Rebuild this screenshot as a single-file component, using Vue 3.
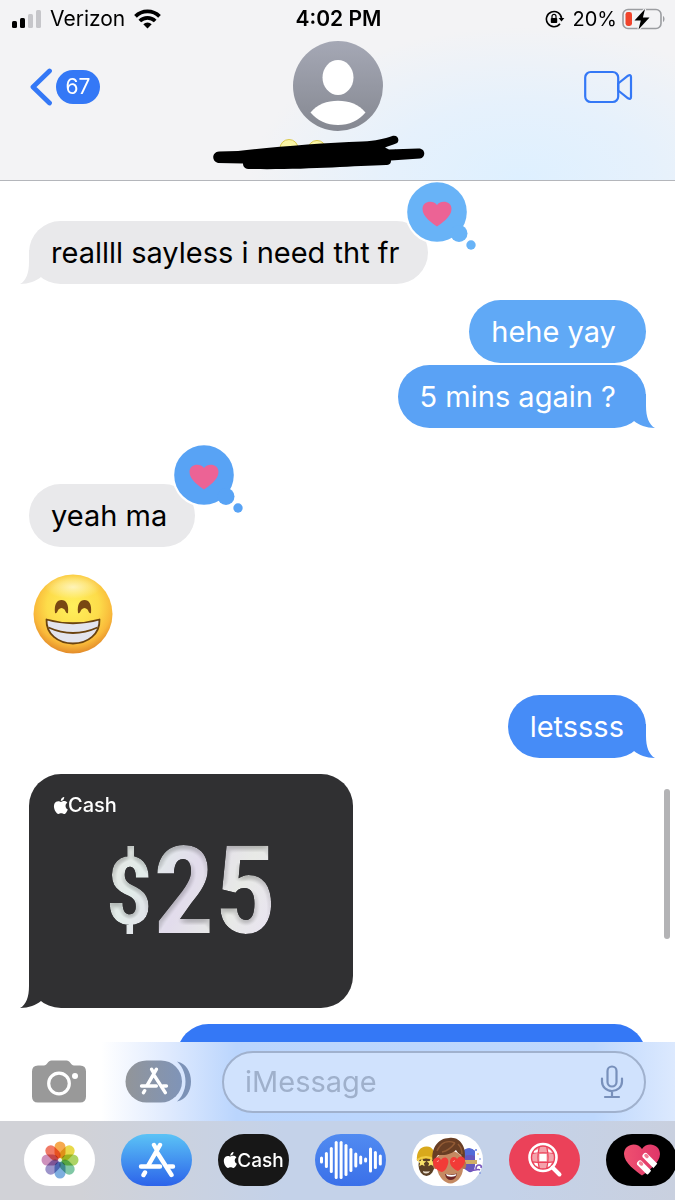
<template>
  <div class="phone">
    <header class="header">
      <div class="status">
        <div class="status-side">
          <svg class="signal" width="30" height="20" viewBox="0 0 30 20" aria-hidden="true">
            <rect x="0" y="12" width="5" height="7" rx="1.5" />
            <rect x="8" y="9" width="5" height="10" rx="1.5" />
            <rect x="16" y="5" width="5" height="14" rx="1.5" fill="#c6c6ca" />
            <rect x="24" y="1" width="5" height="18" rx="1.5" fill="#c6c6ca" />
          </svg>
          <span class="carrier">Verizon</span>
          <svg class="wifi" width="27" height="20" viewBox="0 0 27 20" fill="none" stroke="#000" stroke-width="3.8" aria-hidden="true">
            <path d="M1.5 7.4a17 17 0 0 1 24 0" />
            <path d="M5.8 12a11 11 0 0 1 15.4 0" />
            <path d="M13.5 19.5l-4.2-4.2a6 6 0 0 1 8.4 0z" fill="#000" stroke="none" />
          </svg>
        </div>
        <strong>4:02 PM</strong>
        <div class="status-side right">
          <svg width="20" height="18" viewBox="0 0 20 18" aria-hidden="true">
            <path d="M15 13.8A7.6 7.6 0 1 1 16.6 8.5" fill="none" stroke="#000" stroke-width="1.6" />
            <path d="M13.6 8h5.8l-2.9 3.6z" />
            <rect x="5.8" y="8" width="6.4" height="5" rx="0.8" />
            <path d="M7 8V6.4a2 2 0 0 1 4 0V8" fill="none" stroke="#000" stroke-width="1.2" />
          </svg>
          <span class="percent">20%</span>
          <svg class="battery" width="43" height="22" viewBox="0 0 43 22" aria-hidden="true">
            <rect x="1" y="1.5" width="38" height="19" rx="5" fill="none" stroke="#9b9da1" stroke-width="1.6" />
            <path d="M41 8c2 1 2 5 0 6z" fill="#9b9da1" />
            <rect x="3.5" y="4" width="6.5" height="14" rx="2.4" fill="#f0442c" />
            <path d="M23 1L12.5 12.5h6.3L16.5 21.5 27.5 9.5h-6.6z" stroke="#f1f2f5" stroke-width="2.4" paint-order="stroke" />
          </svg>
        </div>
      </div>

      <nav class="nav">
        <button class="back" aria-label="Back, 67 unread">
          <svg width="24" height="38" viewBox="0 0 24 38" fill="none" stroke="#3478f6" stroke-width="4.8" stroke-linecap="round" stroke-linejoin="round">
            <path d="M20.5 3L4 19l16.5 16" />
          </svg>
          <span class="badge">67</span>
        </button>
        <div class="contact">
          <svg width="90" height="90" viewBox="0 0 90 90" role="img" aria-label="Contact">
            <defs>
              <linearGradient id="avatarFill" x2="0" y2="1">
                <stop offset="0" stop-color="#a5a8b5" />
                <stop offset="1" stop-color="#858891" />
              </linearGradient>
            </defs>
            <circle cx="45" cy="45" r="45" fill="url(#avatarFill)" />
            <ellipse cx="45" cy="36.5" rx="15.5" ry="17.5" fill="#fff" />
            <path d="M17.5 71.5C24 63.5 34 59.8 45 59.8s21 3.7 27.5 11.7C66 79.5 56 84 45 84s-21-4.5-27.5-12.5z" fill="#fff" />
          </svg>
          <svg width="250" height="36" viewBox="0 0 250 36" aria-hidden="true">
            <circle cx="76" cy="13.5" r="9" fill="#fbf6a6" stroke="#dcca4c" />
            <circle cx="104" cy="14.5" r="9" fill="#fbf6a6" stroke="#dcca4c" />
            <path d="M182 14l5 6" stroke="#b4b6ba" />
            <path d="M6 16.5L25 16C59 12 109 8 149 6.5C164 6 170 4 180 0.8C186 0 187 7 183 8.5C180 10 175 11 172 12.5L176 14.5L205 13.5C213 13 213 22.5 207 23.5L178 25.5C178 29 176 30 173 30C139 31 89 35 37 34C32 34 30 32 30 28.5L5 28C-2 26 -1 17 6 16.5z" />
          </svg>
        </div>
        <button class="video" aria-label="FaceTime">
          <svg width="50" height="34" viewBox="0 0 50 34" fill="none" stroke="#3478f6" stroke-width="2.2" stroke-linejoin="round">
            <rect x="2.2" y="2" width="33" height="30" rx="5.5" />
            <path d="M35.2 13.5L45 5.7Q48 4 48 7V27Q48 30 45 28.3L35.2 20.5z" />
          </svg>
        </button>
      </nav>
    </header>

    <main class="thread">
      <div
        v-for="m in messages"
        :key="m.id"
        class="row"
        :class="[m.from, m.gap]"
      >
        <div v-if="m.text" class="bubble" :class="m.tone">
          <span class="text">{{ m.text }}</span>
          <svg v-if="m.tail" class="tail" width="31" height="34" viewBox="0 0 31 34" aria-hidden="true">
            <path :d="tailPath" />
          </svg>
          <svg v-if="m.loved" class="reaction" width="71" height="71" viewBox="0 0 71 71" role="img" aria-label="Loved">
            <circle cx="30" cy="31" r="32" fill="#fff" />
            <g :fill="m.loved">
              <circle cx="30" cy="31" r="29.8" />
              <circle cx="52" cy="52.5" r="8.5" />
              <circle cx="64" cy="64" r="4.7" />
            </g>
            <path d="M30 45.5C26 42.5 15.5 36 15.5 28C15.5 20 26 18.5 30 24C34 18.5 44.5 20 44.5 28C44.5 36 34 42.5 30 45.5z" fill="#ec6395" />
          </svg>
        </div>

        <svg v-else-if="m.emoji" class="emoji" width="80" height="80" viewBox="0 0 80 80" role="img" aria-label="Beaming face">
          <defs>
            <radialGradient id="face" cx=".5" cy=".4" r=".6">
              <stop offset="0" stop-color="#fff05c" />
              <stop offset=".55" stop-color="#fddc4a" />
              <stop offset=".82" stop-color="#f9b93a" />
              <stop offset="1" stop-color="#e38b2a" />
            </radialGradient>
            <radialGradient id="shine">
              <stop offset="0" stop-color="#fff" stop-opacity=".6" />
              <stop offset="1" stop-color="#fff" stop-opacity="0" />
            </radialGradient>
          </defs>
          <circle cx="40" cy="40" r="39.5" fill="url(#face)" />
          <ellipse cx="40" cy="13" rx="28" ry="12" fill="url(#shine)" />
          <path d="M22 39C21 30 24 26 28.5 26S36 30 35 39C33 40 32.5 37 31.5 35.5Q28.5 32.5 25.5 35.5C24.5 37 24 40 22 39z" fill="#794813" />
          <path d="M45 39C44 30 47 26 51.5 26S59 30 58 39C56 40 55.5 37 54.5 35.5Q51.5 32.5 48.5 35.5C47.5 37 47 40 45 39z" fill="#794813" />
          <path d="M13.5 45.5Q40 53 66.5 45.5C67 60 55 69.5 40 69.5S13 60 13.5 45.5z" fill="#e3e4ee" stroke="#6b430f" stroke-width="1.8" stroke-linejoin="round" />
          <path d="M15.5 53.5Q40 64.5 64.5 53.5" fill="none" stroke="#6b430f" stroke-width="1.8" />
        </svg>

        <article v-else-if="m.amount" class="bubble card">
          <div class="cash-brand">
            <svg class="apple" width="15" height="17" viewBox="1 0 21 24" aria-hidden="true"><path :d="applePath" /></svg>
            <span>Cash</span>
          </div>
          <p class="amount"><span class="currency">$</span>{{ m.amount }}</p>
          <svg class="tail" width="31" height="34" viewBox="0 0 31 34" aria-hidden="true">
            <path :d="tailPath" />
          </svg>
        </article>

        <div v-else class="bubble next"></div>
      </div>
      <div class="scroll-thumb"></div>
    </main>

    <footer>
      <form class="compose" @submit.prevent>
        <button type="button" aria-label="Camera">
          <svg width="54" height="43" viewBox="0 0 54 43" aria-hidden="true">
            <path d="M6 5.5H12C15 5.5 16 0.5 19.5 0.5H34.5C38 0.5 39 5.5 42 5.5H48Q54 5.5 54 11.5V36.5Q54 42.5 48 42.5H6Q0 42.5 0 36.5V11.5Q0 5.5 6 5.5z" fill="#999" />
            <circle cx="27" cy="23.5" r="10.3" fill="none" stroke="#fff" stroke-width="3.2" />
            <circle cx="43" cy="16" r="3" fill="#fff" />
          </svg>
        </button>
        <button type="button" class="apps-toggle" aria-label="Apps">
          <svg width="67" height="43" viewBox="0 0 67 43" aria-hidden="true">
            <defs>
              <linearGradient id="toggleFill">
                <stop offset="0" stop-color="#929599" />
                <stop offset="1" stop-color="#7f94b8" />
              </linearGradient>
            </defs>
            <path d="M21.5 0.5H36a21 21 0 0 1 0 42H21.5a21 21 0 0 1 0-42z" fill="url(#toggleFill)" />
            <path d="M52 1.5C61 3 66 12 66 21.5S61 40 52 41.5C56 38 60.5 31 60.5 21.5S56 5 52 1.5z" fill="#7c92b7" />
            <svg x="14" y="7" width="30" height="28" viewBox="0 0 38 36" v-html="storeGlyph"></svg>
          </svg>
        </button>
        <div class="field">
          <input v-model="draft" type="text" placeholder="iMessage" aria-label="iMessage">
          <button type="button" aria-label="Dictate">
            <svg width="24" height="34" viewBox="0 0 24 34" fill="none" stroke="#7890bb" stroke-width="2.2" stroke-linecap="round">
              <rect x="7.5" y="1.5" width="9" height="20" rx="4.5" />
              <path d="M2 13.5V16.5a10 9.5 0 0 0 20 0V13.5M12 26v6M5 32h14" />
            </svg>
          </button>
        </div>
      </form>

      <div class="app-strip">
        <button class="app" aria-label="Photos">
          <svg width="38" height="38" viewBox="-19 -19 38 38">
            <rect
              v-for="(c, i) in petals"
              :key="c"
              class="petal"
              x="-5.5" y="-18.5" width="11" height="17" rx="5.5"
              :fill="c"
              :transform="`rotate(${i * 45})`"
            />
            <circle r="1.8" fill="#e8efe4" />
          </svg>
        </button>
        <button class="app store" aria-label="App Store">
          <svg width="38" height="36" viewBox="0 0 38 36" v-html="storeGlyph"></svg>
        </button>
        <button class="app cash">
          <svg class="apple" width="14" height="16" viewBox="1 0 21 24" aria-hidden="true"><path :d="applePath" /></svg>
          <span>Cash</span>
        </button>
        <button class="app audio" aria-label="Audio messages">
          <svg width="62" height="38" viewBox="0 0 62 38" stroke="#fff" stroke-width="3" stroke-linecap="round">
            <line v-for="(h, i) in wave" :key="i" :x1="1.5 + i * 4.9" :x2="1.5 + i * 4.9" :y1="19 - h / 2" :y2="19 + h / 2" />
          </svg>
        </button>
        <button class="app" aria-label="Memoji">
          <svg width="70" height="52" viewBox="0 0 70 52">
            <!-- left friend -->
            <ellipse cx="13.5" cy="31" rx="8" ry="11" fill="#5b4025" />
            <path d="M4 27C3 17 8 12 14 12.5S22 17 22 27Q13 22 4 27z" fill="#d9a91c" />
            <path d="M4 26Q13 20 22 26" fill="none" stroke="#f1cd45" stroke-width="2" />
            <path d="M9 24l1.3 2.9 3 .3-2.4 2 .8 3.1L9 30.7l-2.7 1.6.8-3.1-2.4-2 3-.3zM18 24l1.3 2.9 3 .3-2.4 2 .8 3.1-2.7-1.6-2.7 1.6.8-3.1-2.4-2 3-.3z" fill="#f8e16a" />
            <path d="M10 37Q13.5 38 17 37Q16 39.500 13 39.500T10 37z" fill="#e9dccb" />
            <!-- right friend -->
            <path d="M51 16Q57 12 62 17L62 32Q61 39 56 38L50 34z" fill="#6658bd" />
            <path d="M51 16Q57 12 62 17V22Q57 20 51 22z" fill="#526bd8" />
            <path d="M51 26H64V30H51z" fill="#cfac68" />
            <path d="M55 35c4 4 9-1 12 1M63 35q0-4 3-4t2 3" fill="none" stroke="#7652bd" stroke-width="1.6" />
            <g fill="#5c7ae0"><circle cx="63" cy="16" r="1" /><circle cx="67" cy="25" r=".8" /><circle cx="67" cy="39" r=".8" /></g>
            <circle cx="65" cy="20" r=".8" fill="#e5aa42" />
            <!-- centre face -->
            <path d="M23 24Q38 9 50 24L50 34C50 43 43 49.5 37.5 49.5S25 43 24 34z" fill="#c58a62" />
            <ellipse cx="22.5" cy="31" rx="2.5" ry="4" fill="#b57850" />
            <ellipse cx="51" cy="31" rx="2.2" ry="4" fill="#b57850" />
            <path d="M20 29C17 15 25 4 36 4C47 2 55 14 51 28L48 21C46 20 44 18 43 16C36 22 28 21 25 21C23 23 22 26 22 29z" fill="#683e24" />
            <path d="M24 17C28 8 35 6 42 9M29 18C34 17 39 13 42 9M45 10Q49 14 49 20" fill="none" stroke="#925b35" stroke-width="1.5" />
            <path d="M29 38C24 37 20 32 20 28C20 23 26 22 28 26C31 21 37 24 35 30C34 34 32 37 29 38zM45 37C40 35 37 31 37 28C37 22 43 22 44 25C47 20 53 23 52 28C51 32 48 35 45 37z" fill="#f23b37" />
            <path d="M24 28q1-2 2-1M40 28q1-2 2-1" stroke="#ff9c93" fill="none" />
            <path d="M32 40Q38 41.5 44 39.5Q43 46 38 46T32 40z" fill="#6d2726" />
            <path d="M33 40Q38 42 43.5 40L42.5 42Q38 43.5 34 42z" fill="#fff" />
          </svg>
        </button>
        <button class="app images" aria-label="#images">
          <svg width="36" height="38" viewBox="0 0 36 38" fill="none">
            <path d="M25.5 26.5L32.5 33.5" stroke="#fff" stroke-width="4" stroke-linecap="round" />
            <circle cx="16" cy="16.5" r="13.5" stroke="#fff" stroke-width="2.6" />
            <circle cx="16" cy="16.5" r="10.8" fill="#f4a2ab" />
            <path d="M12.5 13h7v7h-7zM7 13h5v-5L7 10zM20 8v5h6l-3-4zM7 21h5v5l-4-2zM20 21h5l-2 4-3 1z" fill="#fff" />
            <path d="M12.2 6C10.5 13 10.5 20 12.2 27M19.8 6C21.5 13 21.5 20 19.8 27M5 12.5Q16 11 27 12.5M5 20.8Q16 22 27 20.8" stroke="#eb4159" stroke-width="1.2" />
          </svg>
        </button>
        <button class="app touch" aria-label="Digital Touch">
          <svg width="38" height="34" viewBox="0 0 38 34">
            <defs>
              <linearGradient id="heartFill"><stop stop-color="#ef5070" /><stop offset="1" stop-color="#df3669" /></linearGradient>
            </defs>
            <path d="M19 32.5C13 28 1 20 1 11C1 1 14-2 19 6C24-2 37 1 37 11C37 20 25 28 19 32.5z" fill="url(#heartFill)" />
            <path d="M22.5 13L33.5 24M17 20.5L25 28.5" stroke="#fff" stroke-width="6" stroke-linecap="round" />
            <path d="M23 12.5l1 1M17.5 20l1 1" stroke="#f17e95" stroke-width="3.5" stroke-linecap="round" />
            <path d="M37 17.5L24 32.5H38z" fill="#000" />
          </svg>
        </button>
      </div>
    </footer>

    <!-- bevel used by the cash amount -->
    <svg class="defs" width="0" height="0" aria-hidden="true">
      <filter id="bevel" x="0" y="0" width="1" height="1" color-interpolation-filters="sRGB">
        <feGaussianBlur in="SourceAlpha" stdDeviation="3" result="soft" />
        <feDiffuseLighting in="soft" surfaceScale="5" diffuseConstant="1.2" lighting-color="#fff" result="light">
          <feDistantLight azimuth="80" elevation="62" />
        </feDiffuseLighting>
        <feComposite in="SourceGraphic" in2="light" operator="arithmetic" k1=".3" k2=".7" result="lit" />
        <feComposite in="lit" in2="SourceAlpha" operator="in" />
      </filter>
    </svg>
  </div>
</template>

<script setup>
import { ref } from 'vue';

const draft = ref('');

// some texts were sent with a trailing space, the bubble keeps it
const messages = [
  { id: 1, from: 'them', text: 'reallll sayless i need tht fr ', tail: true, loved: '#68b3f7' },
  { id: 2, from: 'me', text: 'hehe yay ', tone: 'sky', gap: 'gap-m' },
  { id: 3, from: 'me', text: '5 mins again ? ', tone: 'sky-deep', tail: true, gap: 'gap-s' },
  { id: 4, from: 'them', text: 'yeah ma ', loved: '#58a3f5', gap: 'gap-xl' },
  { id: 5, from: 'them', emoji: true, gap: 'gap-l' },
  { id: 6, from: 'me', text: 'letssss', tone: 'blue', tail: true, gap: 'gap-emoji' },
  { id: 7, from: 'them', amount: '25', gap: 'gap-m' },
  { id: 8, from: 'me', gap: 'gap-m' },
];

const petals = ['#f5a03a', '#e6d536', '#a3cf54', '#72c19b', '#6fa5dc', '#9188c5', '#c985b5', '#ef6b55'];

const wave = [4, 13, 23, 35, 35, 29, 21, 12, 6, 2, 22, 15, 8, 2];

const tailPath = 'M9 0V12C9 23 6 31 0 34C9 34 16 31 21 27L31 30V0z';

// === Shared glyphs ===
const storeGlyph = `
  <g fill="none" stroke="#fff" stroke-width="4.4" stroke-linecap="round">
    <path d="M16 3L18 6.5M22 3L10.5 23M19.5 11L33.5 33M7 30.5L5.5 33"/>
    <path d="M3 24.5H22M30.5 24.5H35"/>
  </g>`;

const applePath = 'M12.152 6.896c-.948 0-2.415-1.078-3.96-1.04-2.04.027-3.91 1.183-4.961 3.014-2.117 3.675-.546 9.103 1.519 12.09 1.013 1.454 2.208 3.09 3.792 3.039 1.52-.065 2.09-.987 3.935-.987 1.831 0 2.35.987 3.96.948 1.637-.026 2.676-1.48 3.676-2.948 1.156-1.688 1.636-3.325 1.662-3.415-.039-.013-3.182-1.221-3.22-4.857-.026-3.04 2.48-4.494 2.597-4.559-1.429-2.09-3.623-2.324-4.39-2.376-2-.156-3.675 1.09-4.61 1.09zM15.53 3.83c.843-1.012 1.4-2.427 1.245-3.83-1.207.052-2.662.805-3.532 1.818-.78.896-1.454 2.338-1.273 3.714 1.338.104 2.715-.688 3.559-1.701';
</script>

<style>
body { margin: 0; background: #fff; }
</style>

<style scoped>
.phone {
  display: flex;
  flex-direction: column;
  height: 100vh;
  overflow: hidden;
  font-family: Inter, Roboto, sans-serif;
  color: #000;
}
button { padding: 0; border: none; background: none; font: inherit; color: inherit; cursor: pointer; }
svg { display: block; flex: none; }
.defs { position: absolute; }

/* header */
.header {
  border-bottom: 1px solid #b4b6bb;
  background:
    radial-gradient(ellipse 40% 85% at 77% 100%, #def0ff, #e0f0ffb0 50%, transparent),
    #f3f3f5;
}
.status {
  display: grid;
  grid-template-columns: 1fr auto 1fr;
  align-items: center;
  height: 37px;
  padding: 0 10px 0 12px;
  font-size: 20px;
}
.status strong { font-size: 21px; font-weight: 600; }
.carrier { font-size: 21px; }
.status-side { display: flex; align-items: center; }
.signal { margin-right: 8px; }
.wifi { margin-left: 9px; }
.right { justify-content: flex-end; }
.percent { margin: 0 5px 0 8px; }
.nav {
  display: grid;
  grid-template-columns: 1fr auto 1fr;
  align-items: start;
  height: 139px;
  padding: 4px 29px 0;
}
.back { display: flex; align-items: center; gap: 3px; margin-top: 27px; }
.badge {
  min-width: 44px;
  border-radius: 17px;
  background: #3478f6;
  color: #fff;
  font-size: 21px;
  line-height: 34px;
}
.contact { display: flex; flex-direction: column; align-items: center; gap: 4px; }
.video { justify-self: end; margin: 29px 13px 0 0; }

/* thread */
.thread {
  position: relative;
  flex: 1 1 0;
  min-height: 0;
  overflow: hidden;
  padding: 40px 29px 0;
}
.row { display: flex; }
.me { justify-content: flex-end; }
.gap-s { margin-top: 2px; }
.gap-m { margin-top: 16px; }
.gap-l { margin-top: 27px; }
.gap-xl { margin-top: 56px; }
.gap-emoji { margin-top: 41px; }
.bubble {
  position: relative;
  padding: 0 20px 0 22px;
  border-radius: 32px;
  background: #e9e9eb;
  fill: #e9e9eb;
  font-size: 29px;
  line-height: 63px;
}
.text { white-space: pre-wrap; }
.me .bubble { padding: 0 22px; color: #fff; }
.sky { background: #60a9f6; fill: #60a9f6; }
.sky-deep { background: #5aa2f5; fill: #5aa2f5; }
.blue { background: #468cf7; fill: #468cf7; }
.next { width: 68%; height: 63px; background: #3478f6; }
.me .next { box-sizing: border-box; width: 76%; }
.tail { position: absolute; left: -9px; bottom: 0; }
.me .tail { left: auto; right: -9px; transform: scaleX(-1); }
.reaction { position: absolute; top: -40px; right: -50px; overflow: visible; }
.emoji { margin-left: 4px; }
.card {
  box-sizing: border-box;
  width: 324px;
  height: 234px;
  padding: 21px 24px;
  background: #303032;
  fill: #303032;
  color: #fff;
}
.cash-brand { display: flex; align-items: center; font-size: 20px; font-weight: 500; line-height: 20px; }
.apple { fill: #fff; }
.amount {
  display: flex;
  justify-content: center;
  align-items: center;
  margin: 15px 0 0;
  font-family: "Roboto Condensed", Roboto, sans-serif;
  font-size: 122px;
  font-weight: 700;
  line-height: 124px;
  color: transparent;
  background: linear-gradient(115deg, #e8e2de 10%, #e2ece9 32%, #e2dcec 48%, #e8eae6 64%, #e9e1f5 85%);
  background-clip: text;
  -webkit-background-clip: text;
  filter: url(#bevel);
}
.currency { font-size: 94px; }
.scroll-thumb {
  position: absolute;
  top: 608px;
  right: 5px;
  width: 6px;
  height: 150px;
  border-radius: 3px;
  background: #b3b3b5;
}

/* compose bar */
.compose {
  display: flex;
  align-items: center;
  height: 79px;
  padding: 0 29px 0 32px;
  background: linear-gradient(90deg, #fff 15%, #dfeafe 25%, #bad5fd 35%, #bed8fd 88%, #dce9fe);
}
.apps-toggle { margin: 0 30px 0 39px; }
.field {
  display: flex;
  flex: 1;
  align-items: center;
  min-width: 0;
  height: 58px;
  padding: 0 20px 0 21px;
  border: 2px solid #a0b1cd;
  border-radius: 31px;
  background: #d0e2fd;
}
.field input {
  flex: 1;
  min-width: 0;
  padding: 0;
  border: none;
  outline: none;
  background: none;
  font: 29px Inter, Roboto, sans-serif;
}
.field input::placeholder { color: #9fb0cb; opacity: 1; }

/* app strip */
.app-strip {
  display: flex;
  gap: 26px;
  height: 66px;
  padding: 13px 0 0 24px;
  overflow: hidden;
  background: linear-gradient(90deg, #d1d2d7 12%, #c4d2e9 42%, #c4d2e9 75%, #c9d0df);
}
.app {
  display: flex;
  flex: none;
  align-items: center;
  justify-content: center;
  width: 71px;
  height: 52px;
  border-radius: 26px;
  background: #fff;
}
.petal { mix-blend-mode: multiply; opacity: 0.9; }
.store { background: linear-gradient(#5bc3f6, #2c63ea); }
.cash { background: #171717; color: #fff; font-size: 19px; font-weight: 500; }
.audio { background: linear-gradient(#518bf1, #3a70e9); }
.images { background: #eb4159; }
.touch { background: #000; }
</style>
